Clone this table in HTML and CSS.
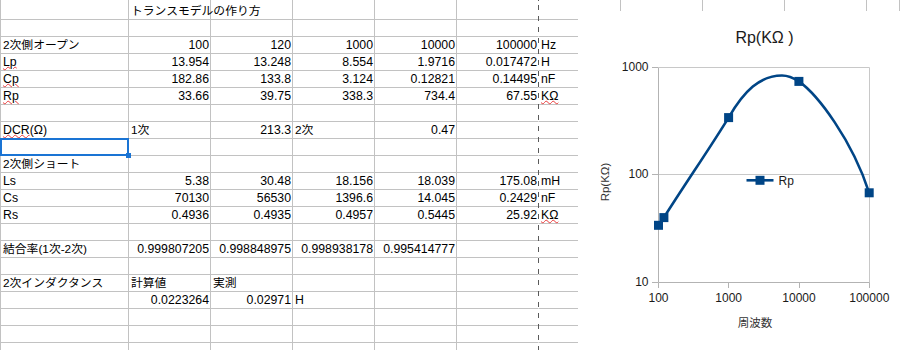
FILE: index.html
```html
<!DOCTYPE html>
<html lang="ja">
<head>
<meta charset="utf-8">
<title>トランスモデルの作り方</title>
<link rel="stylesheet" href="styles.css">
</head>
<body>
<table class="sheet">
<colgroup><col class="ca"><col class="cn"><col class="cn"><col class="cn"><col class="cn"><col class="cn"><col class="cn"><col class="cn"><col class="cn"><col class="cn"><col class="ck"></colgroup>
<tbody>
<tr class="first"><td></td><td class="j">トランスモデルの作り方</td><td></td><td></td><td></td><td class="pb"></td><td></td><td></td><td></td><td></td><td></td></tr>
<tr><td></td><td></td><td></td><td></td><td></td><td class="pb"></td><td></td><td></td><td></td><td></td><td></td></tr>
<tr><td class="j">2次側オープン</td><td class="n">100</td><td class="n">120</td><td class="n">1000</td><td class="n">10000</td><td class="n pb">100000</td><td>Hz</td><td></td><td></td><td></td><td></td></tr>
<tr><td><span class="sq">Lp</span></td><td class="n">13.954</td><td class="n">13.248</td><td class="n">8.554</td><td class="n">1.9716</td><td class="n pb">0.017472</td><td>H</td><td></td><td></td><td></td><td></td></tr>
<tr><td><span class="sq">Cp</span></td><td class="n">182.86</td><td class="n">133.8</td><td class="n">3.124</td><td class="n">0.12821</td><td class="n pb">0.14495</td><td>nF</td><td></td><td></td><td></td><td></td></tr>
<tr><td><span class="sq">Rp</span></td><td class="n">33.66</td><td class="n">39.75</td><td class="n">338.3</td><td class="n">734.4</td><td class="n pb">67.55</td><td><span class="sq">KΩ</span></td><td></td><td></td><td></td><td></td></tr>
<tr><td></td><td></td><td></td><td></td><td></td><td class="pb"></td><td></td><td></td><td></td><td></td><td></td></tr>
<tr><td><span class="sq">DCR</span>(Ω)</td><td class="j">1次</td><td class="n">213.3</td><td class="j">2次</td><td class="n">0.47</td><td class="pb"></td><td></td><td></td><td></td><td></td><td></td></tr>
<tr><td class="sel"></td><td></td><td></td><td></td><td></td><td class="pb"></td><td></td><td></td><td></td><td></td><td></td></tr>
<tr><td class="j">2次側ショート</td><td></td><td></td><td></td><td></td><td class="pb"></td><td></td><td></td><td></td><td></td><td></td></tr>
<tr><td>Ls</td><td class="n">5.38</td><td class="n">30.48</td><td class="n">18.156</td><td class="n">18.039</td><td class="n pb">175.08</td><td>mH</td><td></td><td></td><td></td><td></td></tr>
<tr><td>Cs</td><td class="n">70130</td><td class="n">56530</td><td class="n">1396.6</td><td class="n">14.045</td><td class="n pb">0.2429</td><td>nF</td><td></td><td></td><td></td><td></td></tr>
<tr><td>Rs</td><td class="n">0.4936</td><td class="n">0.4935</td><td class="n">0.4957</td><td class="n">0.5445</td><td class="n pb">25.92</td><td><span class="sq">KΩ</span></td><td></td><td></td><td></td><td></td></tr>
<tr><td></td><td></td><td></td><td></td><td></td><td class="pb"></td><td></td><td></td><td></td><td></td><td></td></tr>
<tr><td class="j">結合率(1次-2次)</td><td class="n">0.999807205</td><td class="n">0.998848975</td><td class="n">0.998938178</td><td class="n">0.995414777</td><td class="pb"></td><td></td><td></td><td></td><td></td><td></td></tr>
<tr><td></td><td></td><td></td><td></td><td></td><td class="pb"></td><td></td><td></td><td></td><td></td><td></td></tr>
<tr><td class="j">2次インダクタンス</td><td class="j">計算値</td><td class="j">実測</td><td></td><td></td><td class="pb"></td><td></td><td></td><td></td><td></td><td></td></tr>
<tr><td></td><td class="n">0.0223264</td><td class="n">0.02971</td><td>H</td><td></td><td class="pb"></td><td></td><td></td><td></td><td></td><td></td></tr>
<tr><td></td><td></td><td></td><td></td><td></td><td class="pb"></td><td></td><td></td><td></td><td></td><td></td></tr>
<tr><td></td><td></td><td></td><td></td><td></td><td class="pb"></td><td></td><td></td><td></td><td></td><td></td></tr>
<tr><td></td><td></td><td></td><td></td><td></td><td class="pb"></td><td></td><td></td><td></td><td></td><td></td></tr>
</tbody>
</table>
<div class="pagebreak"></div>
<svg class="chart" viewBox="578 11 322 339" width="322" height="339">
  <rect x="578" y="11" width="322" height="339" fill="#ffffff"/>
  <text class="ttl" x="764.5" y="42.5" text-anchor="middle">Rp(KΩ )</text>
  <path d="M658.5 67.5H869.5M658.5 174.5H869.5M869.5 67.5V282.5" stroke="#c8c8c8" stroke-width="1" fill="none"/>
  <path d="M658.5 67.5V282.5H869.5M652 67.5H658M652 174.5H658M652 282.5H658M658.5 282.5V288M728.5 282.5V288M799.5 282.5V288M869.5 282.5V288" stroke="#b3b3b3" stroke-width="1" fill="none"/>
  <g class="lbl">
    <text x="648.5" y="71" text-anchor="end">1000</text>
    <text x="648.5" y="178" text-anchor="end">100</text>
    <text x="648.5" y="286" text-anchor="end">10</text>
    <text x="658.5" y="302" text-anchor="middle">100</text>
    <text x="728.7" y="302" text-anchor="middle">1000</text>
    <text x="799" y="302" text-anchor="middle">10000</text>
    <text x="869.3" y="302" text-anchor="middle">100000</text>
  </g>
  <text class="axt" x="755" y="327" text-anchor="middle">周波数</text>
  <text class="axt" x="605" y="186" text-anchor="middle" transform="rotate(-90 605 182)">Rp(KΩ)</text>
  <path d="M658.5,225.3 L663.9,217.6 C684.6,184.6 708.3,150.6 728.6,117.6 C744,91 760,75.5 782,75.5 C789,75.5 793,77.5 798.9,81.4 C818,95 852,140 869.2,192.8" stroke="#004586" stroke-width="2.6" fill="none" stroke-linejoin="round"/>
  <g fill="#004586">
    <rect x="654" y="220.8" width="9" height="9"/>
    <rect x="659.4" y="213.1" width="9" height="9"/>
    <rect x="724.1" y="113.1" width="9" height="9"/>
    <rect x="794.4" y="76.9" width="9" height="9"/>
    <rect x="864.7" y="188.3" width="9" height="9"/>
  </g>
  <path d="M746.5 180.3H773.5" stroke="#004586" stroke-width="2.6"/>
  <rect x="755.5" y="175.8" width="9" height="9" fill="#004586"/>
  <text class="leg" x="778.5" y="185">Rp</text>
</svg>
</body>
</html>
```
FILE: styles.css
```css
html, body {
  margin: 0;
  padding: 0;
  background: #ffffff;
  overflow: hidden;
}

body {
  position: relative;
  width: 900px;
  height: 350px;
  font-family: "Liberation Sans", "Noto Sans CJK JP", sans-serif;
}

.sheet {
  border-collapse: separate;
  border-spacing: 0;
  table-layout: fixed;
  width: 900px;
  border-left: 1px solid #c2c2c2;
  font-size: 12.3px;
  color: #000000;
}

.sheet col.ca { width: 128px; }
.sheet col.cn { width: 82px; }
.sheet col.ck { width: 33px; }

.sheet td {
  box-sizing: border-box;
  height: 17px;
  padding: 0 1px 0 2px;
  border-right: 1px solid #c2c2c2;
  border-bottom: 1px solid #c2c2c2;
  white-space: nowrap;
  overflow: visible;
  line-height: 16px;
  vertical-align: bottom;
}

.sheet tr.first td {
  height: 20px;
  padding-top: 3px;
  padding-bottom: 0;
}

.sheet td.n {
  text-align: right;
  padding: 0 1px 0 0;
}

.sheet td.j {
  font-size: 11.8px;
}

.sheet td.pb {
  border-right-color: transparent;
}

.sq {
  text-decoration: underline wavy #ea3c3c;
  text-decoration-thickness: 1px;
  text-underline-offset: 0px;
}

.sheet td.sel {
  position: relative;
}

.sheet td.sel::after {
  content: "";
  position: absolute;
  left: -1px;
  top: -1px;
  right: -1px;
  bottom: -1px;
  border: 2px solid #1a74d4;
  z-index: 1;
}

.sheet td.sel::before {
  content: "";
  position: absolute;
  right: -3px;
  bottom: -3px;
  width: 5px;
  height: 5px;
  background: #1a74d4;
  z-index: 2;
}

.pagebreak {
  position: absolute;
  left: 538px;
  top: 0;
  width: 1px;
  height: 350px;
  background: repeating-linear-gradient(to bottom, #5a5a5a 0 5px, transparent 5px 11px);
  background-position: 0 5px;
}

.chart {
  position: absolute;
  left: 578px;
  top: 11px;
  display: block;
  font-family: "Liberation Sans", "Noto Sans CJK JP", sans-serif;
}

.chart .ttl {
  font-size: 16px;
  fill: #1a1a1a;
}

.chart .lbl text {
  font-size: 12px;
  fill: #1a1a1a;
}

.chart .axt {
  font-size: 11.5px;
  fill: #333333;
}

.chart .leg {
  font-size: 12px;
  fill: #1a1a1a;
}
```
